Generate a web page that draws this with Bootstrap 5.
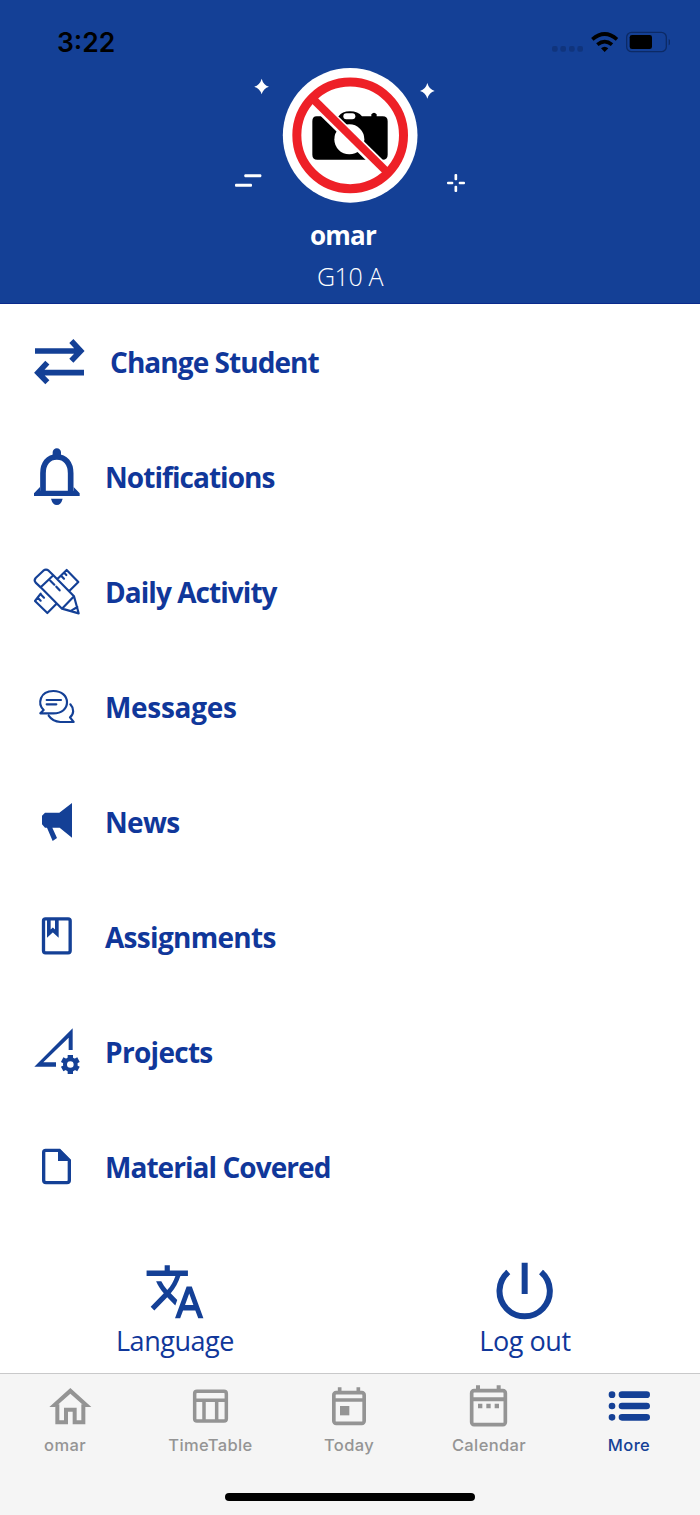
<!DOCTYPE html>
<html lang="en">
<head>
<meta charset="utf-8">
<meta name="viewport" content="width=device-width, initial-scale=1">
<title>More</title>
<link href="https://cdn.jsdelivr.net/npm/bootstrap@5.3.0/dist/css/bootstrap.min.css" rel="stylesheet">
<style>
:root{--brand:#144096;--ink:#10379a}
body{width:700px;height:1515px;background:#fff;overflow:hidden;font-family:"Open Sans","Noto Sans",sans-serif;color:var(--ink)}
svg{display:block;flex:none}
.hero{height:304px;background:var(--brand);border-bottom:1px solid #0a2a8c}
.status{height:55px;padding:0 30px 0 57px;color:#000}
.clock{font:600 26.5px/30px Inter,sans-serif;margin-top:27px}
.student{font-size:26px;font-weight:700;line-height:36px;letter-spacing:-.8px;margin:12px 14px 0 0}
.grade{font-size:25px;font-weight:300;line-height:36px;letter-spacing:-.4px;margin-top:5px}
.entry{height:115px;padding:27px 0 0 27px;text-decoration:none;color:var(--ink)}
.entry svg{color:var(--brand)}
.label{font-size:28px;font-weight:700;line-height:40px;letter-spacing:-.95px;margin:11px 0 0 18px;white-space:nowrap}
.label.roomy{letter-spacing:-.7px}
.label.wide{letter-spacing:-.3px}
.entry:first-child .label{margin-left:23px}
.actions{height:149px}
.action{width:350px;padding-top:36px}
.action svg{color:var(--brand)}
.action span{font-size:27px;line-height:40px;letter-spacing:-.45px;white-space:nowrap}
.tabs{height:142px;background:#f5f5f5;border-top:1px solid #c9c9ca}
.tab-item{width:140px;padding-top:6px;color:#949494}
.tab-item span{font:500 16.5px/20px Inter,sans-serif;letter-spacing:.38px;margin:5px 2px 0 0;white-space:nowrap}
.tab-item:first-child span{margin-right:10px}
.tab-item:nth-child(2) span{margin-right:-1px}
.tab-item.current{color:var(--brand)}
.home-bar{width:250px;height:8px;border-radius:4px;background:#000;margin:38px auto 0}
</style>
</head>
<body>
<header class="hero d-flex flex-column align-items-center">
  <div class="status d-flex justify-content-between w-100">
    <div class="clock">3:22</div>
    <svg width="120" height="30" viewBox="60 36 360 90" style="margin-top:27px">
      <g fill="#10347d"><rect x="66" y="93" width="17" height="17" rx="6"/><rect x="91" y="93" width="17" height="17" rx="6"/><rect x="117" y="93" width="17" height="17" rx="6"/><rect x="142" y="93" width="17" height="17" rx="6"/></g>
      <g fill="none" stroke="#000" stroke-width="11"><path d="M187 73Q224 41 261 73"/><path d="M202 89Q224 71 246 89"/></g>
      <path d="M213 100Q224 91 235 100L224 111z"/>
      <rect x="290" y="52" width="119" height="58" rx="15" fill="none" stroke="#0c2a66" stroke-width="4"/>
      <rect x="299" y="60" width="67" height="42" rx="7"/><path d="M416 72Q430 81 416 91z" fill="#0c2a66"/>
    </svg>
  </div>
  <svg width="260" height="150" viewBox="0 0 780 450">
    <circle cx="390.500" cy="241" r="202" fill="#fff"/>
    <path d="M290 184H356Q366 169 390 169Q414 169 426 184H454V178Q462 168 470 178V184H488Q503 184 503 199V299Q503 314 488 314H292Q277 314 277 299V199Q277 184 290 184z"/>
    <rect x="370" y="175" width="36" height="18" rx="9" fill="#fff"/>
    <circle cx="388" cy="253" r="45" fill="#fff"/>
    <path d="M280 136L495 346" stroke="#fff" stroke-width="36"/>
    <g fill="none" stroke="#ee2027"><circle cx="390.500" cy="241" r="160" stroke-width="27"/><path d="M281 134L498 348" stroke-width="24"/></g>
    <g fill="#fff"><path d="M125 71Q130 90 147 95Q130 100 125 118Q120 100 102 95Q120 90 125 71z"/><path d="M622 84Q627 103 644 108Q627 113 622 131Q617 113 600 108Q617 103 622 84z"/>
    <rect x="73" y="358" width="51" height="9" rx="3"/><rect x="45" y="386" width="51" height="9" rx="3"/>
    <rect x="703.500" y="357" width="8" height="19" rx="3"/><rect x="703.500" y="392" width="8" height="19" rx="3"/><rect x="681" y="380" width="19" height="8" rx="3"/><rect x="716" y="380" width="19" height="8" rx="3"/></g>
  </svg>
  <div class="student text-white">omar</div>
  <div class="grade text-white">G10 A</div>
</header>

<nav>
  <a class="entry d-flex"><svg width="60" height="60" viewBox="21 18 180 180" fill="none" stroke="currentColor" stroke-width="17"><path d="M45 78H182M154 48L182 78L154 107M192 143H55M82 113L54 143L82 172"/></svg><span class="label">Change Student</span></a>
  <a class="entry d-flex"><svg width="60" height="60" viewBox="21 363 180 180" fill="currentColor"><path d="M69 500V445C69 415 85 396 110.500 396S152 415 152 445V500" fill="none" stroke="currentColor" stroke-width="17"/><path d="M98 394V382A12.500 12.500 0 0 1 123 382V394zM60 486L42 505V513H179V505L161 486V497H60zM93 521H128Q123 540 110.500 540T93 521z"/></svg><span class="label">Notifications</span></a>
  <a class="entry d-flex"><svg width="60" height="60" viewBox="21 33 180 180" fill="none" stroke="currentColor" stroke-width="6.500" stroke-linejoin="round" stroke-linecap="round"><path d="M62 112L47 98Q41 91 47 84L70 62Q78 56 86 62L100 76L62 112L126 176L176 190L162 139L100 76M126 176L162 139M154 182L172 171M113 86L140 60L175 96L147 124M62 131L45 153L82 189L108 163M124 78L132 86M134 70L139 75M54 144L62 152M64 135L72 143M91 92L103 104M109 110L119 121"/></svg><span class="label">Daily Activity</span></a>
  <a class="entry d-flex"><svg width="60" height="60" viewBox="21 378 180 180" fill="none" stroke="currentColor" stroke-width="6.500" stroke-linejoin="round" stroke-linecap="round"><path d="M61 490L71 480C52 462 59 423 100 423C126 423 141 439 141 457C141 476 126 490 100 490zM80 450H123M80 463H109M151 463C163 476 162 492 150 502L161 516H121Q98 515 86 497"/></svg><span class="label wide">Messages</span></a>
  <a class="entry d-flex"><svg width="60" height="60" viewBox="21 18 180 180" fill="currentColor"><path d="M75 83H118L156 54V158L119 128H97L111 159L98 168L81 128H75L66 118V92z"/></svg><span class="label roomy">News</span></a>
  <a class="entry d-flex"><svg width="60" height="60" viewBox="21 363 180 180" fill="none" stroke="currentColor" stroke-width="10"><rect x="70.500" y="401.500" width="80" height="102" rx="6"/><path d="M86.500 403V446L98.500 435L110.500 446V403" stroke-width="11"/></svg><span class="label roomy">Assignments</span></a>
  <a class="entry d-flex"><svg width="60" height="60" viewBox="21 18 180 180" fill="currentColor"><path d="M43 155L158 40V105H146V68L70 142H108V155z"/><g stroke="currentColor" stroke-width="16"><path d="M151 120V133M151 164V177M126.500 134L138 140M164 156L175.500 162M126.500 162L138 156M164 140L175.500 134"/></g><circle cx="151" cy="148.500" r="16" fill="none" stroke="currentColor" stroke-width="12"/></svg><span class="label roomy">Projects</span></a>
  <a class="entry d-flex"><svg width="60" height="60" viewBox="21 363 180 180" fill="none" stroke="currentColor" stroke-width="10"><path d="M77 406H118L148 436V496Q148 503 141 503H78Q71 503 71 496V412Q71 406 77 406z"/><path d="M114 403H120L152 435V438H114z" fill="currentColor" stroke="none"/></svg><span class="label">Material Covered</span></a>
</nav>

<section class="actions d-flex">
  <div class="action d-flex flex-column align-items-center"><svg width="62" height="61" viewBox="0 0 24 23" preserveAspectRatio="none" fill="currentColor"><path d="M12.870 15.070l-2.540-2.510.03-.03c1.740-1.940 2.980-4.170 3.710-6.530H17V4h-7V2H8v2H1v1.990h11.170C11.500 7.920 10.440 9.750 9 11.350 8.070 10.320 7.300 9.190 6.690 8h-2c.73 1.630 1.730 3.170 2.980 4.560l-5.090 5.020L4 19l5-5 3.110 3.110.76-2.040zM18.500 10h-2L12 22h2l1.120-3h4.750L21 22h2l-4.500-12zm-2.620 7l1.620-4.330L19.120 17h-3.240z"/></svg><span>Language</span></div>
  <div class="action d-flex flex-column align-items-center"><svg width="62" height="61" viewBox="1181 30 186 183" fill="none" stroke="currentColor" stroke-width="18"><path d="M1273 38V132M1224 66A75.500 75.500 0 1 0 1322 66"/></svg><span>Log out</span></div>
</section>

<footer class="tabs">
  <div class="d-flex">
    <div class="tab-item d-flex flex-column align-items-center"><svg width="140" height="50" viewBox="0 45 420 150" fill="none" stroke="currentColor" stroke-width="12"><path d="M172 118V172H198V134H224V172H250V118"/><path d="M148 126L211 69L274 126H256L211 86L166 126z" fill="currentColor" stroke="none"/></svg><span>omar</span></div>
    <div class="tab-item d-flex flex-column align-items-center"><svg width="140" height="50" viewBox="420 45 420 150" fill="none" stroke="currentColor" stroke-width="10.500"><rect x="584" y="79" width="95" height="89" rx="7"/><path d="M583 106H680M612 106V169M650 106V169"/></svg><span>TimeTable</span></div>
    <div class="tab-item d-flex flex-column align-items-center"><svg width="140" height="50" viewBox="840 45 420 150" fill="none" stroke="currentColor" stroke-width="11"><rect x="1001.500" y="83" width="91" height="92" rx="7"/><path d="M1001 105H1093M1019 67V83M1075 67V83"/><rect x="1020" y="123" width="28" height="28" fill="currentColor" stroke="none"/></svg><span>Today</span></div>
    <div class="tab-item d-flex flex-column align-items-center"><svg width="140" height="50" viewBox="210 45 420 150" fill="none" stroke="currentColor" stroke-width="11"><rect x="365" y="77" width="101" height="102" rx="7"/><path d="M365 103H466M384 61V77M446 61V77" stroke-width="12"/><path d="M384 123H448" stroke-width="13" stroke-dasharray="13 12"/></svg><span>Calendar</span></div>
    <div class="tab-item current d-flex flex-column align-items-center"><svg width="140" height="50" viewBox="630 45 420 150" stroke="currentColor" stroke-width="20" stroke-linecap="round"><path d="M786 89h.1M816 89H890M786 123h.1M816 123H890M786 157h.1M816 157H890"/></svg><span>More</span></div>
  </div>
  <div class="home-bar"></div>
</footer>
<script src="https://cdn.jsdelivr.net/npm/bootstrap@5.3.0/dist/js/bootstrap.bundle.min.js"></script>
</body>
</html>
